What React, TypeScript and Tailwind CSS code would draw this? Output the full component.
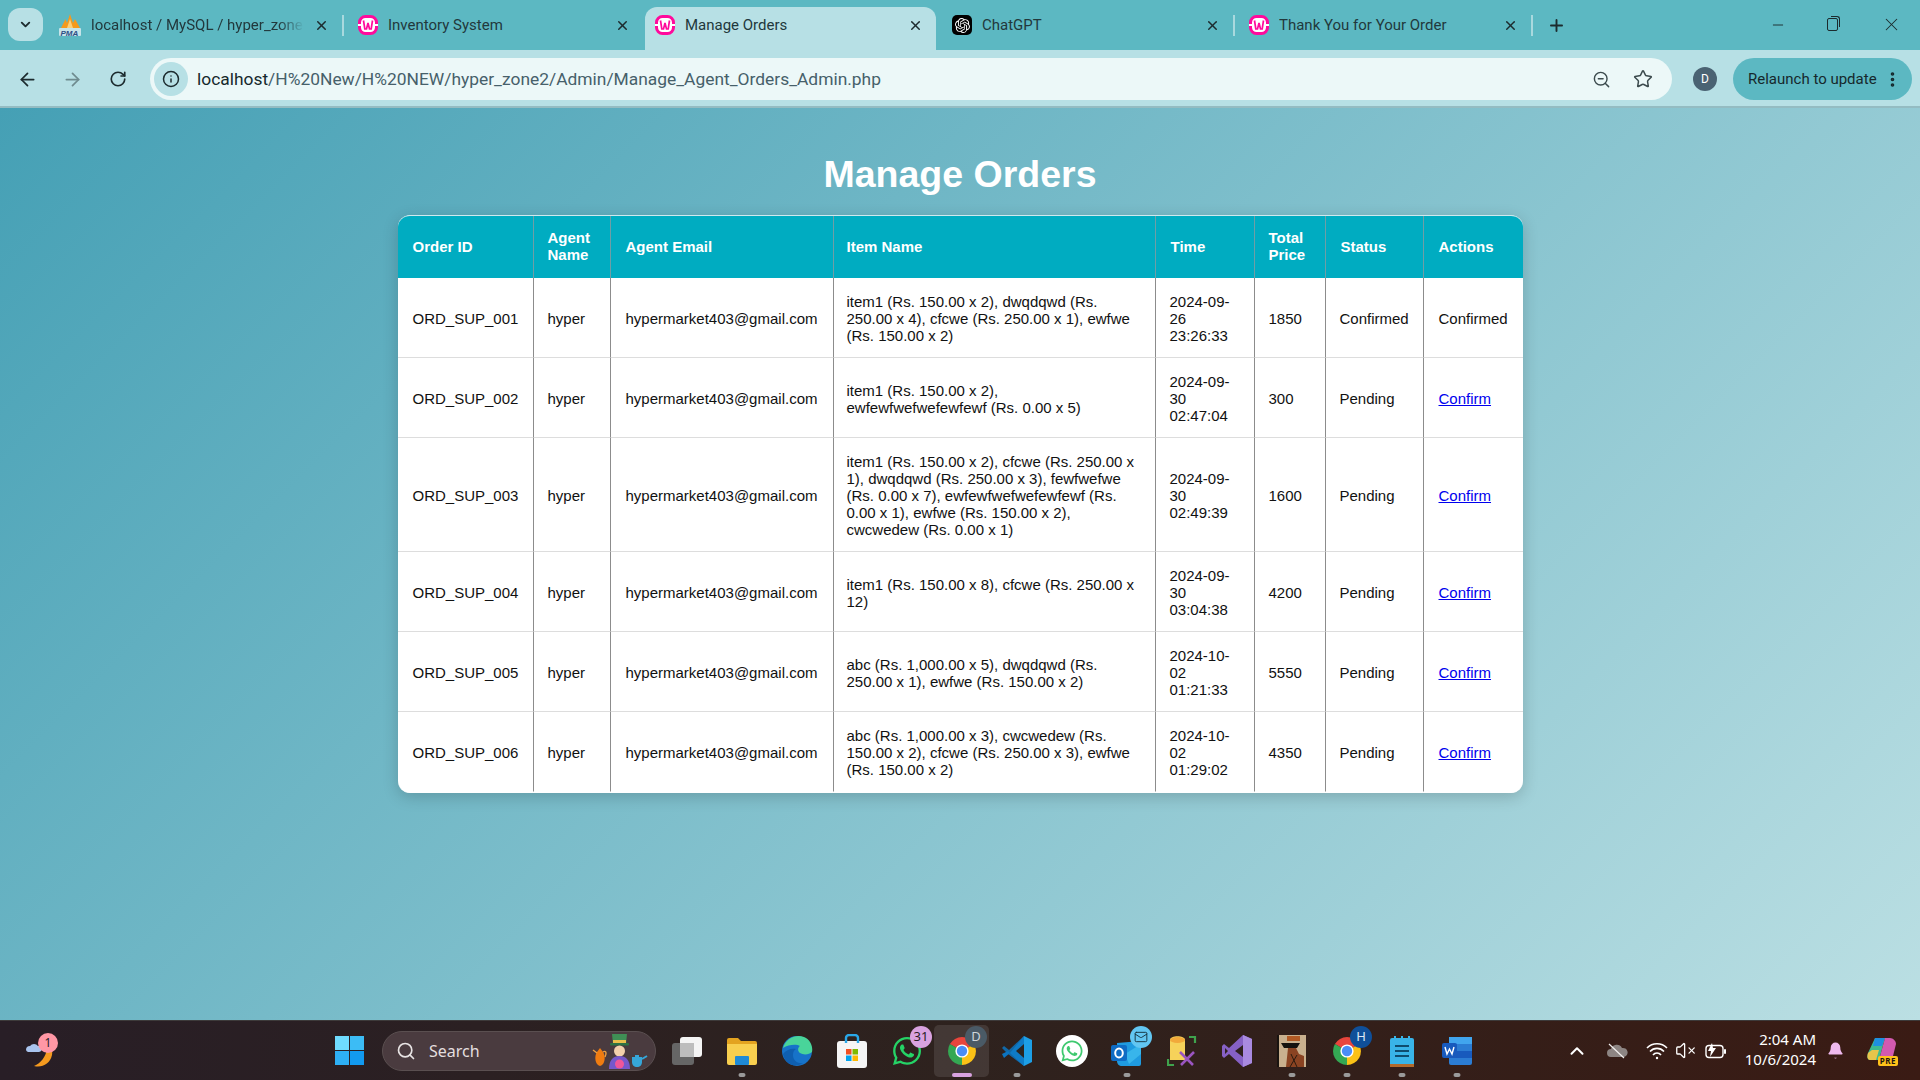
import React from "react";
import {
  ArrowLeft,
  ArrowRight,
  RotateCw,
  Info,
  ZoomOut,
  Star,
  X,
  Plus,
  Minus,
  EllipsisVertical,
  ChevronDown,
  ChevronUp,
  Search,
  VolumeX,
  Bell,
  Mail,
} from "lucide-react";
import { SiOpenai } from "react-icons/si";
import { FaWhatsapp } from "react-icons/fa";

const orders = [
  { id: "ORD_SUP_001", items: "item1 (Rs. 150.00 x 2), dwqdqwd (Rs. 250.00 x 4), cfcwe (Rs. 250.00 x 1), ewfwe (Rs. 150.00 x 2)", time: "2024-09-26 23:26:33", price: "1850", status: "Confirmed" },
  { id: "ORD_SUP_002", items: "item1 (Rs. 150.00 x 2), ewfewfwefwefewfewf (Rs. 0.00 x 5)", time: "2024-09-30 02:47:04", price: "300", status: "Pending" },
  { id: "ORD_SUP_003", items: "item1 (Rs. 150.00 x 2), cfcwe (Rs. 250.00 x 1), dwqdqwd (Rs. 250.00 x 3), fewfwefwe (Rs. 0.00 x 7), ewfewfwefwefewfewf (Rs. 0.00 x 1), ewfwe (Rs. 150.00 x 2), cwcwedew (Rs. 0.00 x 1)", time: "2024-09-30 02:49:39", price: "1600", status: "Pending" },
  { id: "ORD_SUP_004", items: "item1 (Rs. 150.00 x 8), cfcwe (Rs. 250.00 x 12)", time: "2024-09-30 03:04:38", price: "4200", status: "Pending" },
  { id: "ORD_SUP_005", items: "abc (Rs. 1,000.00 x 5), dwqdqwd (Rs. 250.00 x 1), ewfwe (Rs. 150.00 x 2)", time: "2024-10-02 01:21:33", price: "5550", status: "Pending" },
  { id: "ORD_SUP_006", items: "abc (Rs. 1,000.00 x 3), cwcwedew (Rs. 150.00 x 2), cfcwe (Rs. 250.00 x 3), ewfwe (Rs. 150.00 x 2)", time: "2024-10-02 01:29:02", price: "4350", status: "Pending" },
];

function WampIcon() {
  return (
    <svg width="20" height="20" viewBox="0 0 20 20" className="shrink-0">
      <rect x="1.500" y="1.500" width="17" height="17" rx="6" fill="#fff" stroke="#ff0a9c" strokeWidth="3" />
      <path d="M0 9h3v2H0zM17 9h3v2h-3z" fill="#fff" />
      <path d="M5.500 5.500l1.300 8.500h1.700L10 8l1.500 6h1.700l1.300-8.500" fill="none" stroke="#ff0a9c" strokeWidth="1.700" />
    </svg>
  );
}

function PmaIcon() {
  return (
    <svg width="22" height="24" viewBox="0 0 22 24" className="shrink-0">
      <path d="M2 15L6.500 6 8 10 11 1l3 9 2-4 5 9z" fill="#f59a1c" />
      <path d="M8 15l3-9 3 9z" fill="#fbd07a" />
      <rect x="0" y="15" width="22" height="8" rx="1" fill="#e9f3f5" opacity=".75" />
      <text x="1.500" y="22.500" fontSize="8" fontWeight="700" fontStyle="italic" fill="#2c4f86" fontFamily="Liberation Sans, sans-serif">PMA</text>
    </svg>
  );
}

function Tab({ title, icon, width, pad, active, fade, sep }: { title: string; icon: React.ReactNode; width: string; pad: string; active?: boolean; fade?: boolean; sep?: boolean }) {
  return (
    <div className={`relative flex h-[43px] shrink-0 items-center gap-[10px] pb-[7px] ${pad} ${width} ${active ? "rounded-t-[12px] bg-[#b7e0e5]" : ""}`}>
      {icon}
      <span className={`flex-1 overflow-hidden whitespace-nowrap text-[15px] text-[#22383c] ${fade ? "[mask-image:linear-gradient(90deg,#000_88%,transparent)]" : ""}`}>{title}</span>
      <X size={15} strokeWidth={2.4} className="shrink-0 text-[#1c2b2e]" />
      {sep && <span className="absolute right-0 top-[8px] h-[21px] w-[2px] bg-[#a9d9de]" />}
    </div>
  );
}

function TabStrip() {
  return (
    <div className="flex h-[50px] items-end bg-[#5cb8c2] pl-[8px]">
      <div className="mb-[9px] mr-[3px] flex h-[33px] w-[35px] shrink-0 items-center justify-center rounded-[12px] bg-[#b7e0e5]">
        <ChevronDown size={15} strokeWidth={3} className="text-[#1c2b2e]" />
      </div>
      <Tab title="localhost / MySQL / hyper_zone" icon={<PmaIcon />} width="w-[298px]" pad="pl-[13px] pr-[15px]" fade sep />
      <Tab title="Inventory System" icon={<WampIcon />} width="w-[301px]" pad="pl-[14px] pr-[15px]" />
      <Tab title="Manage Orders" icon={<WampIcon />} width="w-[291px]" pad="pl-[10px] pr-[13px]" active />
      <Tab title="ChatGPT" icon={<span className="flex h-[20px] w-[20px] shrink-0 items-center justify-center rounded-[5px] bg-black"><SiOpenai size={15} className="text-white" /></span>} width="w-[299px]" pad="pl-[16px] pr-[15px]" sep />
      <Tab title="Thank You for Your Order" icon={<WampIcon />} width="w-[298px]" pad="pl-[14px] pr-[15px]" sep />
      <div className="mb-[14px] ml-[12px] flex h-[22px] w-[22px] items-center justify-center">
        <Plus size={19} strokeWidth={2.4} className="text-[#1c2b2e]" />
      </div>
      <div className="mb-[15px] ml-auto flex items-center">
        <Minus size={16} strokeWidth={1.4} className="mr-[41px] text-[#1c2b2e]" />
        <span className="relative mr-[43px] h-[13px] w-[11px] rounded-[2px] border border-[#1c2b2e] after:absolute after:-right-[3px] after:-top-[3px] after:h-[11px] after:w-[9px] after:rounded-tr-[3px] after:border-r after:border-t after:border-[#1c2b2e]" />
        <X size={21} strokeWidth={1.2} className="mr-[18px] text-[#1c2b2e]" />
      </div>
    </div>
  );
}

function Toolbar() {
  return (
    <div className="flex h-[58px] items-start border-b-2 border-[#94bcc2] bg-[#b7e0e5] pt-[8px]">
      <div className="flex h-[42px] w-[150px] shrink-0 items-center pl-[17px] text-[#1c2b2e]">
        <ArrowLeft size={21} strokeWidth={2} />
        <ArrowRight size={21} strokeWidth={2} className="ml-[24px] text-[#6f8b8f]" />
        <RotateCw size={18} strokeWidth={2.2} className="ml-[26px]" />
      </div>
      <div className="flex h-[42px] w-[1522px] shrink-0 items-center rounded-full bg-[#ecf8f8] pl-[4px] pr-[14px]">
        <span className="flex h-[34px] w-[34px] shrink-0 items-center justify-center rounded-full bg-[#b7e0e5]">
          <Info size={18} strokeWidth={2} className="text-[#1c2b2e]" />
        </span>
        <span className="ml-[9px] flex-1 whitespace-nowrap text-[17.400px] text-[#46606a]">
          <span className="text-[#16282c]">localhost</span>/H%20New/H%20NEW/hyper_zone2/Admin/Manage_Agent_Orders_Admin.php
        </span>
        <ZoomOut size={19} strokeWidth={1.8} className="text-[#3c4b4e]" />
        <Star size={20} strokeWidth={1.8} className="ml-[22px] mr-[5px] text-[#3c4b4e]" />
      </div>
      <span className="ml-[21px] mt-[9px] flex h-[24px] w-[24px] items-center justify-center rounded-full bg-[#4a6373] text-[12px] text-white">D</span>
      <div className="ml-[16px] flex h-[42px] w-[179px] items-center rounded-full bg-[#5cb8c2] pl-[15px] text-[15px] text-[#16282c]">
        Relaunch to update
        <EllipsisVertical size={19} strokeWidth={2.6} className="ml-[6px]" />
      </div>
    </div>
  );
}

function OrdersTable() {
  const th = "border-r border-[#6f9ea6] px-[15px] pb-[15px] pt-[13px] text-left font-bold last:border-r-0";
  const td = "border-b border-r border-b-[#dddddd] border-r-[#8c8c8c] px-[15px] pb-[13px] pt-[15px] last:border-r-0 group-last:border-b-white";
  return (
    <div className="mx-auto w-[1125px] overflow-hidden rounded-[12px] border-b border-t border-b-white border-t-[#cfe9ee] bg-white shadow-[0_4px_16px_rgba(0,0,0,0.18)]">
      <table className="w-full table-fixed border-separate border-spacing-0 font-['Liberation_Sans',Arial,sans-serif] text-[15px] leading-[17px] text-[#111]">
        <thead>
          <tr className="bg-[#00acc1] text-white">
            <th className={`${th} w-[136px]`}>Order ID</th>
            <th className={`${th} w-[77px] pl-[14px]`}>Agent Name</th>
            <th className={`${th} w-[223px]`}>Agent Email</th>
            <th className={`${th} w-[322px] pl-[13px]`}>Item Name</th>
            <th className={`${th} w-[99px]`}>Time</th>
            <th className={`${th} w-[71px] pl-[14px] pr-[5px]`}>Total Price</th>
            <th className={`${th} w-[98px]`}>Status</th>
            <th className={`${th} w-[99px]`}>Actions</th>
          </tr>
        </thead>
        <tbody>
          {orders.map((o) => (
            <tr key={o.id} className="group">
              <td className={td}>{o.id}</td>
              <td className={`${td} pl-[14px]`}>hyper</td>
              <td className={td}>hypermarket403@gmail.com</td>
              <td className={`${td} pl-[13px]`}>{o.items}</td>
              <td className={`${td} pl-[14px] pr-[20px]`}>{o.time}</td>
              <td className={`${td} pl-[14px]`}>{o.price}</td>
              <td className={`${td} pl-[14px]`}>{o.status}</td>
              <td className={td}>
                {o.status === "Confirmed" ? "Confirmed" : <a href="#" className="text-[#0000ee] underline">Confirm</a>}
              </td>
            </tr>
          ))}
        </tbody>
      </table>
    </div>
  );
}

function Slot({ children, dot, active }: { children: React.ReactNode; dot?: boolean; active?: boolean }) {
  return (
    <div className={`relative flex h-[52px] w-[55px] shrink-0 items-center justify-center rounded-[5px] ${active ? "bg-white/10" : ""}`}>
      {children}
      {dot && <span className="absolute bottom-0 left-1/2 h-[4px] w-[7px] -translate-x-1/2 rounded-full bg-[#9a9a9a]" />}
      {active && <span className="absolute bottom-0 left-1/2 h-[4px] w-[20px] -translate-x-1/2 rounded-full bg-[#d9a2e0]" />}
    </div>
  );
}

function Badge({ text, bg, color }: { text: React.ReactNode; bg: string; color: string }) {
  return (
    <span className={`absolute right-[2px] top-[1px] flex h-[22px] min-w-[22px] items-center justify-center rounded-full text-[13px] ${bg} ${color}`}>{text}</span>
  );
}

function ChromeIcon() {
  return (
    <svg width="30" height="30" viewBox="0 0 30 30">
      <path d="M15 15L2.900 8A14 14 0 0 1 27.100 8z" fill="#e8453c" />
      <path d="M15 15L27.100 8A14 14 0 0 1 15 29z" fill="#fbc116" />
      <path d="M15 15L15 29A14 14 0 0 1 2.900 8z" fill="#34a853" />
      <circle cx="15" cy="15" r="6.600" fill="#fff" />
      <circle cx="15" cy="15" r="5.200" fill="#4a8df6" />
    </svg>
  );
}

function Taskbar() {
  return (
    <div className="flex h-[60px] items-center border-t border-[#3d3a3a] bg-[linear-gradient(90deg,#281e26,#2e221e_50%,#3a1b14)] font-['Noto_Sans',sans-serif]">
      {/* weather */}
      <div className="relative h-[52px] w-[322px] shrink-0">
        <svg width="34" height="38" viewBox="0 0 34 38" className="absolute left-[23px] top-[9px]">
          <path d="M24 14c4 0 6 2 5 7-2 9-10 13-18 11 7-3 12-9 13-18z" fill="#f59a1f" />
          <path d="M3 16a4 4 0 0 1 4-4 5 5 0 0 1 8 0 3 3 0 0 1 1 6H5a3 3 0 0 1-2-2z" fill="#a9c4ee" />
        </svg>
        <span className="absolute left-[38px] top-[8px] flex h-[20px] w-[20px] items-center justify-center rounded-full bg-[#ff97a5] text-[12px] text-[#2a1e26]">1</span>
      </div>
      <Slot>
        <svg width="29" height="29" viewBox="0 0 29 29">
          <rect width="14" height="14" fill="#6fdcff" />
          <rect x="15" width="14" height="14" fill="#3cbcf5" />
          <rect y="15" width="14" height="14" fill="#2eb0f5" />
          <rect x="15" y="15" width="14" height="14" fill="#129af0" />
        </svg>
      </Slot>
      <div className="ml-[5px] mr-[3px] flex h-[40px] w-[274px] shrink-0 items-center rounded-full border border-[#5a4f50] bg-[#4a3b3f] pl-[13px] text-[16px] text-[#e4dfdf]">
        <Search size={20} strokeWidth={2} className="mr-[13px] text-[#e8e4e4]" />
        Search
        <svg width="56" height="38" viewBox="0 0 56 38" className="ml-auto mr-[7px]">
          {/* orange pot */}
          <path d="M5 20l3-4 3 4c3 4 2 13-3 14-5-1-6-10-3-14z" fill="#f07c10" />
          <path d="M1 18l4 3M11 20c3-2 4 1 2 5" fill="none" stroke="#f0a040" strokeWidth="1.400" />
          {/* hatter */}
          <path d="M21 12L20 2h15l-1 10z" fill="#3f8f55" />
          <rect x="21" y="8" width="13" height="3" fill="#e9c04a" />
          <rect x="18" y="11" width="19" height="2.500" rx="1" fill="#2d7344" />
          <circle cx="27.500" cy="19" r="5.500" fill="#f2d0ac" />
          <path d="M17 37c0-9 4-13 10.500-13S38 28 38 37z" fill="#7658cc" />
          <circle cx="27.500" cy="32" r="4.500" fill="#f0569a" />
          {/* blue pot */}
          <path d="M40 25h10v5c0 3-2 5-5 5s-5-2-5-5z" fill="#36a6d8" />
          <path d="M50 27l5-3M43 24h4" stroke="#36a6d8" strokeWidth="2" />
        </svg>
      </div>
      <Slot>
        <span className="relative h-[28px] w-[30px]">
          <span className="absolute bottom-0 left-0 h-[22px] w-[22px] rounded-[3px] bg-[#666]" />
          <span className="absolute right-0 top-0 h-[20px] w-[22px] rounded-[3px] bg-[#f4f4f4]" />
          <span className="absolute bottom-[8px] left-[8px] h-[14px] w-[14px] bg-[#bdbdbd]" />
        </span>
      </Slot>
      <Slot dot>
        <svg width="32" height="28" viewBox="0 0 32 28">
          <path d="M1 3a2 2 0 0 1 2-2h9l3 3h14a2 2 0 0 1 2 2v3H1z" fill="#e3a320" />
          <path d="M1 7h30v19a2 2 0 0 1-2 2H3a2 2 0 0 1-2-2z" fill="#f8cf4f" />
          <rect x="9" y="19" width="14" height="9" rx="1" fill="#1f8ad6" />
        </svg>
      </Slot>
      <Slot>
        <svg width="32" height="32" viewBox="0 0 32 32">
          <circle cx="16" cy="16" r="15" fill="#1773c9" />
          <path d="M2 13C5 3 15-1 23 2c7 3 9 10 8 15-3 3-9 3-12 1-3-2-2-6 0-7-3-2-11-2-17 2z" fill="#49d49a" />
          <path d="M12 20c0 5 4 9 10 8-7 5-18 2-20-9 3-4 8-6 13-5-2 1-3 3-3 6z" fill="#0f5fb0" />
        </svg>
      </Slot>
      <Slot>
        <svg width="30" height="34" viewBox="0 0 30 34">
          <rect y="7" width="30" height="27" rx="3" fill="#f5f5f5" />
          <path d="M9 9V4a3 3 0 0 1 3-3h6a3 3 0 0 1 3 3v5" fill="none" stroke="#29a7e8" strokeWidth="2.400" />
          <rect x="9" y="15" width="5.500" height="5.500" fill="#f25022" />
          <rect x="15.500" y="15" width="5.500" height="5.500" fill="#7fba00" />
          <rect x="9" y="21.500" width="5.500" height="5.500" fill="#00a4ef" />
          <rect x="15.500" y="21.500" width="5.500" height="5.500" fill="#ffb900" />
        </svg>
      </Slot>
      <Slot>
        <FaWhatsapp size={32} className="text-[#25d366]" />
        <Badge text="31" bg="bg-[#d9a2e0]" color="text-[#2a1e26]" />
      </Slot>
      <Slot active>
        <ChromeIcon />
        <Badge text="D" bg="bg-[#4a5a66]" color="text-[#cfd6da]" />
      </Slot>
      <Slot dot>
        <svg width="32" height="32" viewBox="0 0 32 32">
          <path d="M23 1l8 4v22l-8 4-14-13z" fill="#1d9fe6" />
          <path d="M23 1L8 15 3 11 1 13l6 6L23 31z" fill="#0c74c0" opacity=".85" />
          <path d="M1 19l6-3 2 2-6 5z" fill="#0c74c0" />
          <path d="M23 9v14l-8-7z" fill="#2c2520" />
        </svg>
      </Slot>
      <Slot>
        <span className="flex h-[32px] w-[32px] items-center justify-center rounded-full bg-white">
          <FaWhatsapp size={24} className="text-[#3fc96f]" />
        </span>
      </Slot>
      <Slot dot>
        <svg width="32" height="30" viewBox="0 0 32 30">
          <path d="M6 7l24-2v23a2 2 0 0 1-2 2H11c-3 0-5-2-5-5z" fill="#1f9be0" />
          <path d="M14 18l16-10v10L18 28z" fill="#43c1f0" opacity=".7" />
          <rect x="0" y="9" width="16" height="16" rx="2" fill="#0f6cc4" />
          <ellipse cx="8" cy="17" rx="3.800" ry="4.500" fill="none" stroke="#fff" strokeWidth="2" />
        </svg>
        <span className="absolute right-[2px] top-[1px] flex h-[22px] w-[22px] items-center justify-center rounded-full bg-[#62c6f2]">
          <Mail size={14} strokeWidth={1.6} className="text-[#14303c]" />
        </span>
      </Slot>
      <Slot>
        <svg width="30" height="32" viewBox="0 0 30 32">
          <path d="M3 5c0-5 15-5 15 0v20H3z" fill="#f6d25a" />
          <ellipse cx="10.500" cy="5" rx="7.500" ry="3" fill="#f2a93a" />
          <path d="M22 2h6v6M1 24v6h6" fill="none" stroke="#3fa34d" strokeWidth="2.200" />
          <path d="M13 17l13 13M27 17L14 30" stroke="#9a55c0" strokeWidth="2.600" />
        </svg>
      </Slot>
      <Slot>
        <svg width="30" height="32" viewBox="0 0 30 32">
          <path d="M21 0l9 4v24l-9 4L7 19l-5 4-2-2V11l2-2 5 4z" fill="#8661c5" />
          <path d="M21 0l9 4v24l-9 4z" fill="#a98ae0" />
          <path d="M21 10l-8 6 8 6zM3 13v6l3-3z" fill="#2f211e" />
        </svg>
      </Slot>
      <Slot dot>
        <svg width="29" height="32" viewBox="0 0 29 32">
          <rect width="29" height="32" fill="#c9b08e" />
          <rect x="0" y="0" width="2" height="32" fill="#1a1410" />
          <path d="M10 1h13v5h-13z" fill="#b25a24" />
          <path d="M4 8h19l-3 5H7z" fill="#15120f" />
          <path d="M11 13h8l3 6 5 2v11H9z" fill="#8a4322" />
          <path d="M14 19l6 13M20 20l-7 12" stroke="#2a1a10" strokeWidth="1" />
        </svg>
      </Slot>
      <Slot dot>
        <ChromeIcon />
        <Badge text="H" bg="bg-[#0f4f99]" color="text-[#dce8f5]" />
      </Slot>
      <Slot dot>
        <svg width="24" height="32" viewBox="0 0 24 32">
          <rect y="3" width="24" height="28" rx="2" fill="#39b4e8" />
          <rect y="29" width="24" height="3" fill="#b26a2c" />
          <path d="M5 11h14M5 16h14M5 21h14" stroke="#0f4c6e" strokeWidth="2" />
          <path d="M5 1v4M12 1v4M19 1v4" stroke="#39b4e8" strokeWidth="2" />
        </svg>
      </Slot>
      <Slot dot>
        <svg width="30" height="28" viewBox="0 0 30 28">
          <rect x="7" width="23" height="28" rx="2" fill="#2b7cd3" />
          <rect x="7" width="23" height="7" fill="#41a5ee" />
          <rect x="7" y="14" width="23" height="7" fill="#185abd" />
          <rect y="6" width="15" height="15" rx="2" fill="#185abd" />
          <path d="M3 10l2 7 2.500-5 2.500 5 2-7" fill="none" stroke="#fff" strokeWidth="1.400" />
        </svg>
      </Slot>
      {/* tray */}
      <ChevronUp size={22} strokeWidth={2.2} className="ml-[82px] shrink-0 text-white" />
      <svg width="22" height="16" viewBox="0 0 22 16" className="ml-[18px] shrink-0">
        <path d="M5 14a4 4 0 0 1 0-8 6 6 0 0 1 11-1 4.500 4.500 0 0 1 2 9z" fill="#8d8583" />
        <path d="M3 1l15 14" stroke="#f2efee" strokeWidth="1.200" />
      </svg>
      <svg width="22" height="18" viewBox="0 0 22 18" fill="none" stroke="#fff" strokeWidth="1.600" className="ml-[18px] shrink-0">
        <path d="M1 6a14 14 0 0 1 20 0M4 9.500a9.500 9.500 0 0 1 14 0M7 13a5 5 0 0 1 8 0" />
        <circle cx="11" cy="16" r="1.200" fill="#fff" stroke="none" />
      </svg>
      <VolumeX size={21} strokeWidth={1.5} className="ml-[7px] shrink-0 text-white" />
      <svg width="22" height="16" viewBox="0 0 22 16" className="ml-[9px] shrink-0">
        <rect x="1" y="2.500" width="17" height="12" rx="3" fill="none" stroke="#fff" strokeWidth="1.400" />
        <rect x="19" y="6" width="2" height="5" rx="1" fill="#fff" />
        <path d="M7 0L3 8h3l-1 6 6-9H8z" fill="#fff" />
      </svg>
      <div className="mb-[3px] ml-[19px] w-[70px] shrink-0 text-right text-[15px] leading-[20px] text-white">
        <div>2:04 AM</div>
        <div className="-ml-[10px] whitespace-nowrap">10/6/2024</div>
      </div>
      <Bell size={19} fill="#efb9ee" strokeWidth={0} className="ml-[10px] shrink-0" />
      <span className="relative ml-[22px] h-[30px] w-[30px] shrink-0 overflow-visible">
        <svg width="30" height="26" viewBox="0 0 30 26">
          <path d="M8 2h10l-6 22H3C0 24 0 20 1 17z" fill="#3dbb8f" />
          <path d="M8 2h10L15 10H6z" fill="#1e8fe0" />
          <path d="M18 2h5c3 0 6 3 6 6l-3 12c-1 3-3 4-5 4h-9z" fill="#d25ab0" />
          <path d="M5 14h7l-3 10H3C0 24 0 20 1 17z" fill="#e8c54a" />
        </svg>
        <span className="absolute -right-[1px] bottom-0 rounded-[2px] bg-[#ffc21a] px-[2px] text-[8px] font-bold leading-[10px] tracking-[0.5px] text-[#1c1410]">PRE</span>
      </span>
    </div>
  );
}

export default function App() {
  return (
    <div className="flex h-[1080px] w-[1920px] flex-col overflow-hidden font-['Roboto',sans-serif]">
      <TabStrip />
      <Toolbar />
      <main className="flex-1 bg-[linear-gradient(135deg,#45a0b5,#bbdfe3)] pt-[45px]">
        <h1 className="mb-[19px] text-center font-['Liberation_Sans',Arial,sans-serif] text-[37.500px] font-bold leading-[43px] text-white">Manage Orders</h1>
        <OrdersTable />
      </main>
      <Taskbar />
    </div>
  );
}
